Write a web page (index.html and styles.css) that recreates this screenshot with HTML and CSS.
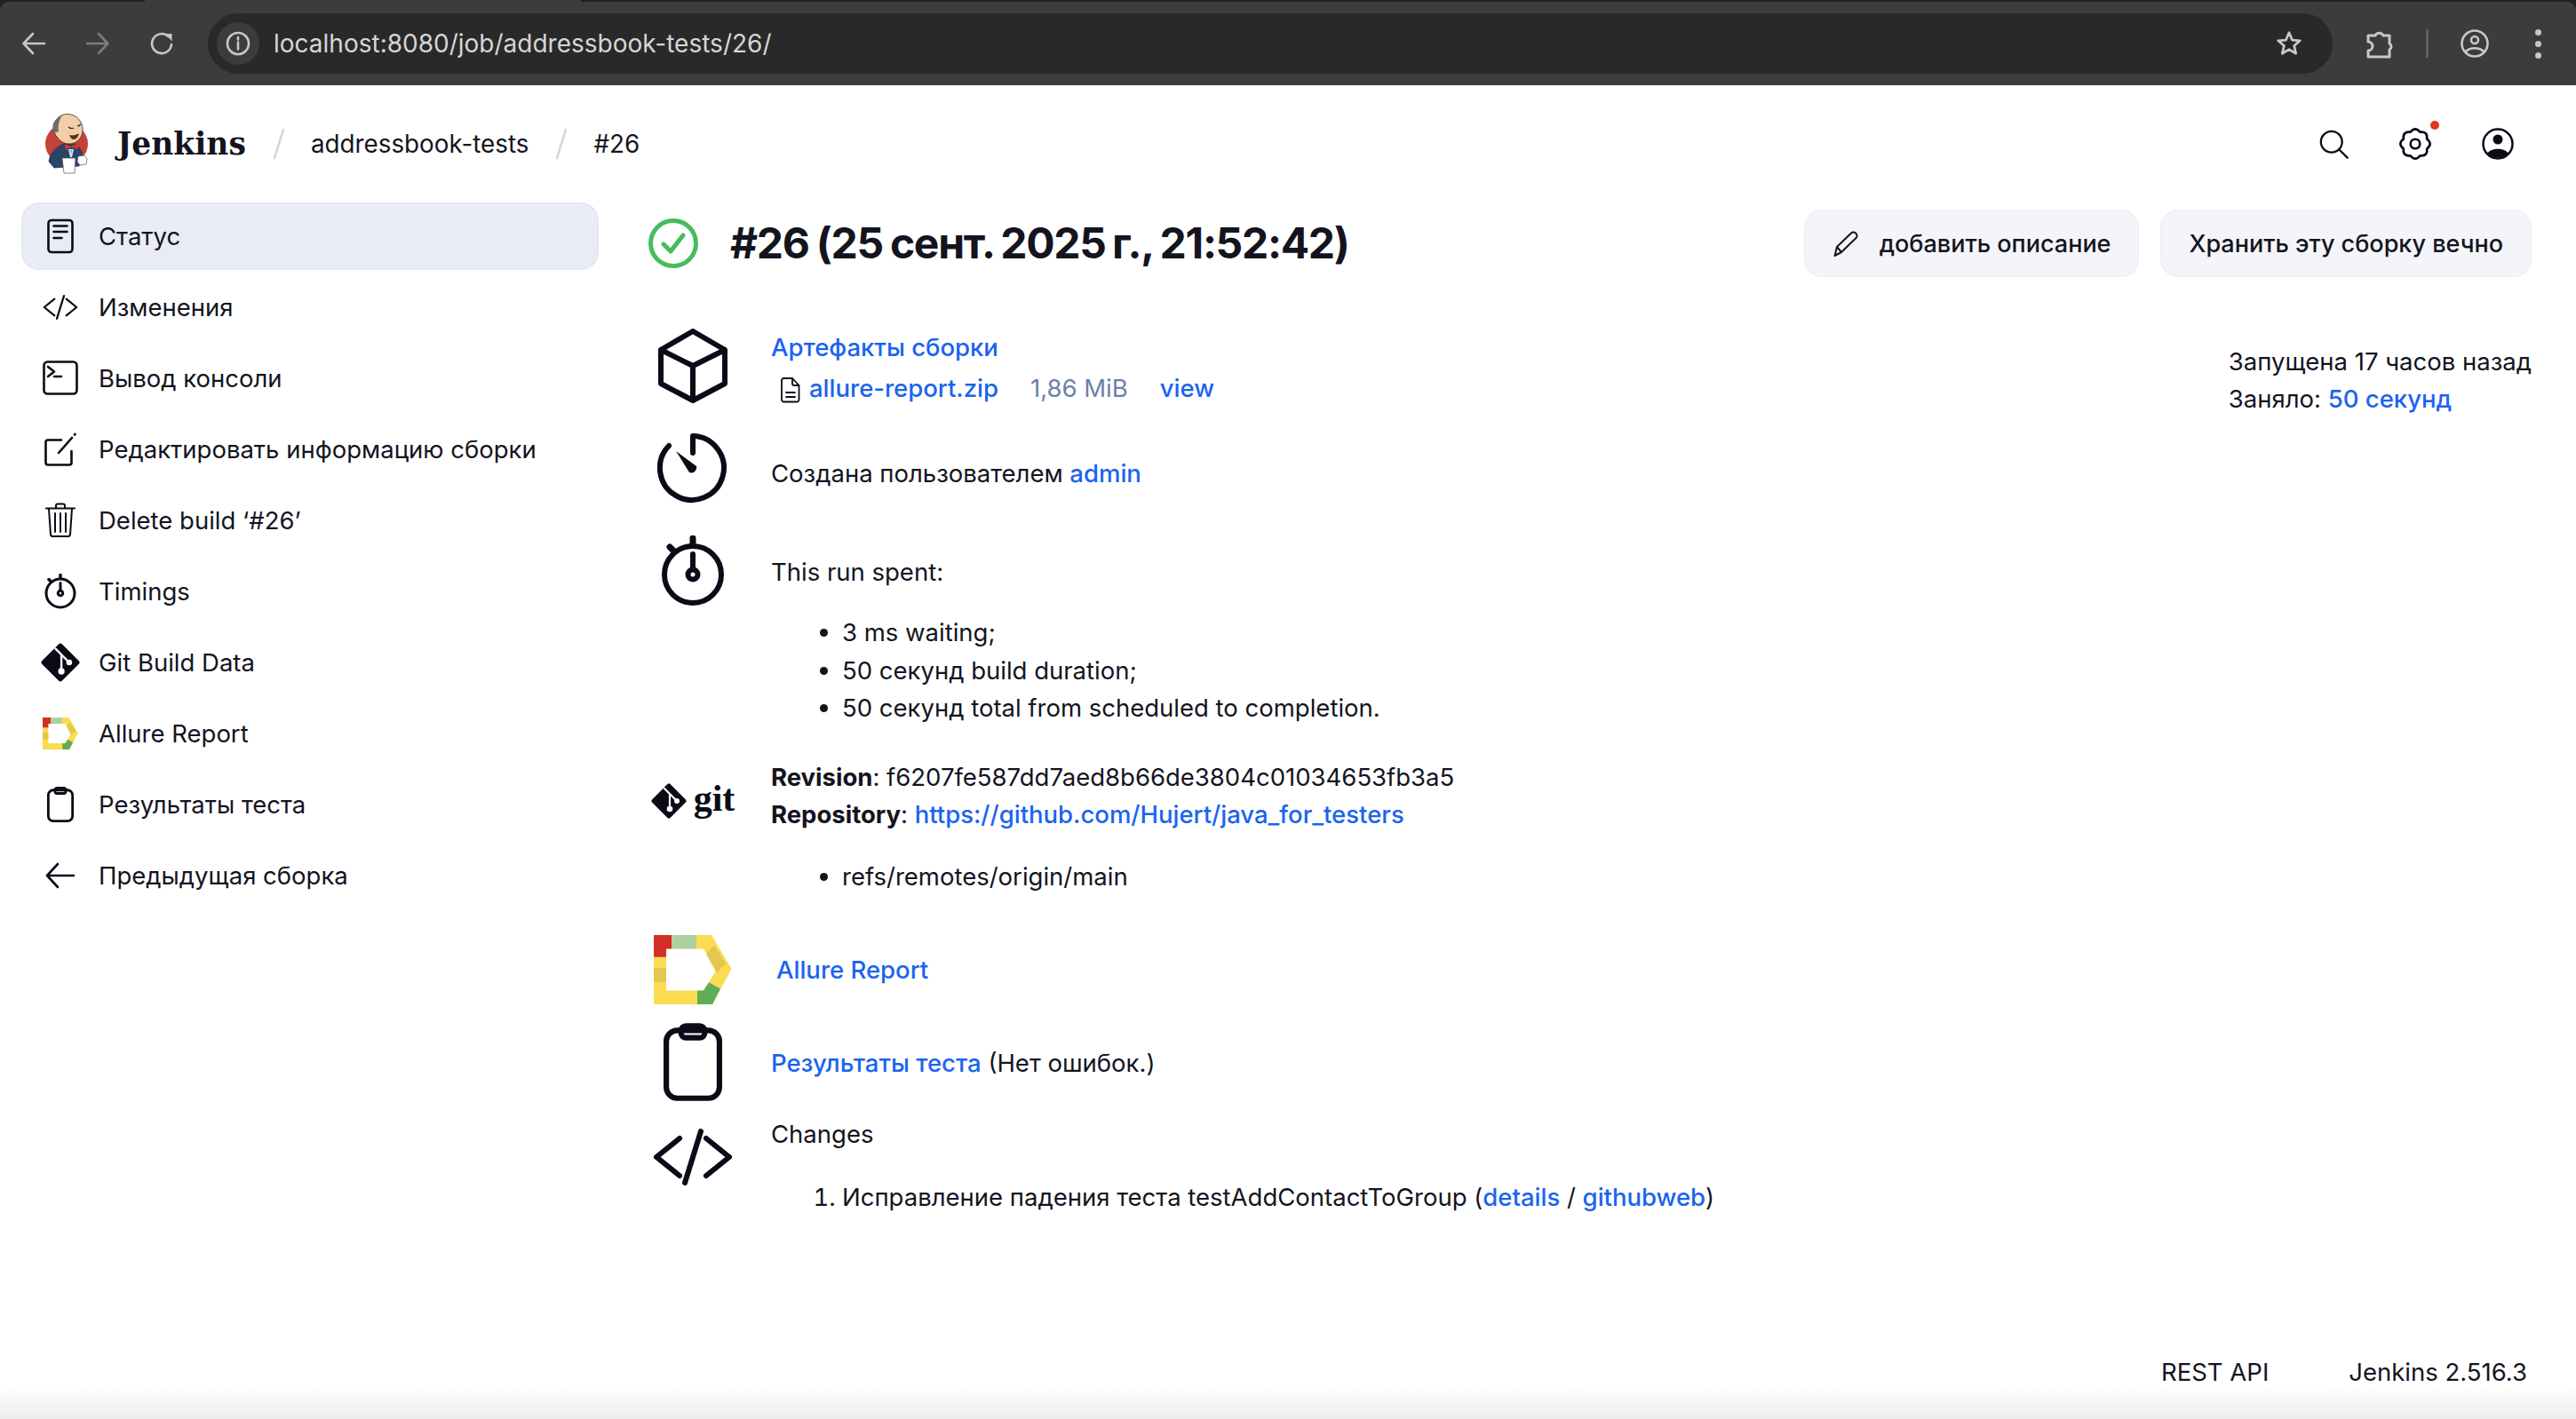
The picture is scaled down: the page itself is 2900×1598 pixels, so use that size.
FILE: index.html
```html
<!DOCTYPE html>
<html lang="ru">
<head>
    <meta charset="UTF-8">
    <meta name="viewport" content="width=device-width, initial-scale=1.0">
    <title>addressbook-tests #26 [Jenkins]</title>
    <link rel="stylesheet" href="styles.css">
</head>
<body>
    <svg class="sprite" width="0" height="0">
        <symbol id="i-code" viewBox="0 0 90 64">
            <path class="line code-line" d="M30 11 4 32l26 21M60 11l26 21-26 21M54 3 36 61"/>
        </symbol>
        <symbol id="i-stopwatch" viewBox="0 0 80 80">
            <circle class="line" cx="40" cy="44" r="32" stroke-width="6"/>
            <path class="line" d="M40 3v6M14 13l4 4" stroke-width="7"/>
            <path class="line" d="M40 21v16" stroke-width="6"/>
            <circle class="line" cx="40" cy="44" r="5.5" stroke-width="6"/>
        </symbol>
        <symbol id="i-clipboard" viewBox="0 0 64 85">
            <rect class="line" x="3" y="8" width="58" height="74" rx="12" stroke-width="6"/>
            <rect class="line" x="19" y="3" width="26" height="13" rx="5.5" stroke-width="6" fill="#fff"/>
        </symbol>
        <symbol id="i-git" viewBox="0 0 40 40">
            <path fill="#0b0b18" stroke="none" d="M38.700 18.200 21.800 1.300a2.500 2.500 0 0 0-3.600 0L1.300 18.200a2.500 2.500 0 0 0 0 3.600l16.900 16.900a2.500 2.500 0 0 0 3.600 0l16.900-16.900a2.500 2.500 0 0 0 0-3.600Z"/>
            <path fill="none" stroke="#fff" stroke-width="2.200" d="M15 6 29 20M21 12v18"/>
            <circle cx="29" cy="20" r="3" fill="#fff" stroke="none"/>
            <circle cx="21" cy="29" r="3.300" fill="#fff" stroke="none"/>
        </symbol>
        <symbol id="i-allure" viewBox="0 0 88 76" preserveAspectRatio="none">
            <path fill="#fbdc50" stroke="none" fill-rule="evenodd" d="M0 0h65l22.500 37L66 76H0ZM14 15v46h42l15-23-15-23Z"/>
            <path fill="#d32f26" stroke="none" d="M0 0h20v15h-6v9H0Z"/>
            <path fill="#aed0a3" stroke="none" d="M20 0h28v15H20Z"/>
            <path fill="#e2c84f" stroke="none" d="M0 36h14v16H0ZM68 11l13 20-10 11-12-21Z"/>
            <path fill="#5fae57" stroke="none" d="M62 52l13 7-9 17H49V61h7Z"/>
        </symbol>
    </svg>

    <div class="chrome">
        <div class="tabstrip"><div class="tab"></div></div>
        <div class="toolbar">
            <svg class="tb-icon back" viewBox="0 0 28 28"><path d="M26 14H3M13 3 2.500 14 13 25"/></svg>
            <svg class="tb-icon fwd" viewBox="0 0 28 28"><path d="M2 14h23M15 3l10.500 11L15 25"/></svg>
            <svg class="tb-icon reload" viewBox="0 0 28 28"><path d="M25 15a11 11 0 1 1-3.500-9"/><path class="solid" d="M18 3h7.500v8.500Z" /></svg>
            <div class="omnibox">
                <span class="site-info">
                    <svg class="tb-icon" viewBox="0 0 28 28"><circle cx="14" cy="14" r="12"/><path d="M14 12.500v8M14 7v2.500"/></svg>
                </span>
                <span class="url">localhost:8080/job/addressbook-tests/26/</span>
                <svg class="tb-icon star" viewBox="0 0 28 28"><path d="m14 2.500 3.300 7.800 8.200.7-6.200 5.400 1.900 8.100-7.200-4.300-7.200 4.300 1.900-8.100L2.500 11l8.200-.7Z"/></svg>
            </div>
            <svg class="tb-icon puzzle" viewBox="0 0 32 34"><path d="M3 8h8a5 5 0 0 1 9 0h7v9a4 4 0 0 1 0 7v8H3v-7a5 5 0 0 0 0-10Z"/></svg>
            <span class="tb-sep"></span>
            <svg class="tb-icon profile" viewBox="0 0 32 36"><circle cx="16" cy="18" r="14.500"/><circle cx="16" cy="14" r="4"/><path d="M6 27c5-5 15-5 20 0"/></svg>
            <span class="dots"><i></i><i></i><i></i></span>
        </div>
    </div>

    <header class="page-header">
        <a class="logo" href="#">
            <svg class="butler" viewBox="0 0 50 68">
                <ellipse cx="25" cy="34" rx="24" ry="23" fill="#c4423a"/>
                <path fill="#2b4568" stroke="#1f2c3d" stroke-width=".7" d="M5 54c1-10 9-17 17-20l12 0c6 3 9 9 9 15l-4 10-28 2Z"/>
                <path fill="#f0cfa6" stroke="#3b3028" stroke-width=".8" d="M11 18C10 7 17 .5 26 .5 36 .5 44 9 43 20 42 28 36 34 28 34 21 34 17 30 14 26 12 24 11 21 11 18Z"/>
                <path fill="#6d6b6d" d="M11 21C7 14 10 6 20 2.500c-4 5-5 12-4 18Z"/>
                <path fill="none" stroke="#2b2320" stroke-width="1.200" d="M27 15c2 2 4 2 6 1M37 14c2 0 3-1 4-2"/>
                <path fill="#5b2b1f" d="M28 24c4 1 8 0 11-2-1 4-3 7-6 7-2 0-4-2-5-5Z"/>
                <path fill="#d8332b" d="M23 34l7 3 8-4v7l-8-2-6 3Z"/>
                <path fill="#dbe8ee" d="M27 40h6l-2 9h-2Z"/>
                <path fill="#6aa7c4" d="M29 41h2l-1 5Z"/>
                <path fill="#fff" stroke="#555" stroke-width=".7" d="M20 50h15l-1 17H22Z"/>
                <path fill="#fff" stroke="#555" stroke-width=".7" d="M38 48l7-1 3 4-1 6-7 1-3-4Z"/>
            </svg>
            <span class="logo-text">Jenkins</span>
        </a>
        <svg class="crumb-sep" viewBox="0 0 14 36"><path d="M12 2 2 34"/></svg>
        <a class="crumb" href="#">addressbook-tests</a>
        <svg class="crumb-sep" viewBox="0 0 14 36"><path d="M12 2 2 34"/></svg>
        <a class="crumb" href="#">#26</a>
        <div class="header-actions">
            <svg class="hd-icon search" viewBox="0 0 36 36"><circle cx="15" cy="15" r="13"/><path d="m24.500 24.500 10 10"/></svg>
            <span class="gear">
                <svg class="hd-icon" viewBox="1 1 34 34"><path d="M23.170 5.530Q18-1 12.830 5.530 4.600 4.600 5.530 12.830-1 18 5.530 23.170 4.600 31.400 12.830 30.470 18 37 23.170 30.470 31.400 31.400 30.470 23.170 37 18 30.470 12.830 31.400 4.600 23.170 5.530Z"/><circle cx="18" cy="18" r="5"/></svg>
                <i class="badge"></i>
            </span>
            <svg class="hd-icon" viewBox="0 0 36 36"><circle cx="18" cy="18" r="16.500"/><circle class="solid" cx="18" cy="13" r="5.500"/><path class="solid" d="M6 29c4-7 20-7 24 0-6 6-18 6-24 0Z"/></svg>
        </div>
    </header>

    <div class="layout">
        <nav class="sidebar">
            <a class="nav-item active" href="#">
                <svg class="nav-icon" viewBox="0 0 40 40"><rect x="6.500" y="2" width="27" height="36" rx="3.500"/><path d="M12.500 8.500h15M12.500 15h15M12.500 22h9"/></svg>
                Статус
            </a>
            <a class="nav-item" href="#"><svg class="nav-icon"><use href="#i-code"/></svg>Изменения</a>
            <a class="nav-item" href="#">
                <svg class="nav-icon" viewBox="0 0 40 40"><rect x="1.500" y="1.500" width="37" height="36" rx="4"/><path d="m6 7 7 5.500L6 18M13 18h8"/></svg>
                Вывод консоли
            </a>
            <a class="nav-item" href="#">
                <svg class="nav-icon" viewBox="0 0 40 40"><path d="M21 9.500H6a2.500 2.500 0 0 0-2.500 2.500v23a2.500 2.500 0 0 0 2.500 2.500h24a2.500 2.500 0 0 0 2.500-2.500V22M18 24 33 7M36 3.500l.5-.5"/></svg>
                Редактировать информацию сборки
            </a>
            <a class="nav-item" href="#">
                <svg class="nav-icon thin" viewBox="0 0 40 40"><path d="M4 6.500h32M15 6V3.500a2 2 0 0 1 2-2h6a2 2 0 0 1 2 2V6M7 7l2 29a2.500 2.500 0 0 0 2.500 2h17a2.500 2.500 0 0 0 2.500-2l2-29M14 12v21M20 12v21M26 12v21"/></svg>
                Delete build ‘#26’
            </a>
            <a class="nav-item" href="#"><svg class="nav-icon"><use href="#i-stopwatch"/></svg>Timings</a>
            <a class="nav-item" href="#"><svg class="nav-icon big"><use href="#i-git"/></svg>Git Build Data</a>
            <a class="nav-item" href="#"><svg class="nav-icon allure"><use href="#i-allure"/></svg>Allure Report</a>
            <a class="nav-item" href="#"><svg class="nav-icon"><use href="#i-clipboard"/></svg>Результаты теста</a>
            <a class="nav-item" href="#">
                <svg class="nav-icon" viewBox="0 0 40 40"><path d="M35 20H6M17 7 5 20l12 13"/></svg>
                Предыдущая сборка
            </a>
        </nav>

        <main class="content">
            <div class="title-row">
                <svg class="status-icon" viewBox="0 0 56 56"><circle cx="28" cy="28" r="25.500"/><path d="m17 29 8 8 14-18"/></svg>
                <h1>#26 (25 сент. 2025&#8239;г., 21:52:42)</h1>
                <div class="title-actions">
                    <a class="btn" href="#">
                        <svg class="pencil" viewBox="0 0 32 30"><path d="M2.500 28 5 18 21 2.500a3.500 3.500 0 0 1 5 0l.5.5a3.500 3.500 0 0 1 0 5L10 24ZM5 18l5 6"/></svg>
                        добавить описание
                    </a>
                    <a class="btn" href="#">Хранить эту сборку вечно</a>
                </div>
            </div>

            <div class="build">
                <div class="build-details">
                    <section class="build-row">
                        <div class="row-icon">
                            <svg class="ic-cube" viewBox="0 0 80 84"><path d="M40 3 76 24v38L40 81 4 62V24ZM4 24l36 18 36-18M40 42v39"/></svg>
                        </div>
                        <div class="row-text">
                            <p><a href="#">Артефакты сборки</a></p>
                            <p class="artifact">
                                <svg class="file-icon" viewBox="0 0 22 30"><path d="M3.500 2H13l7.500 8v16a2.500 2.500 0 0 1-2.500 2.500H3.500A2.500 2.500 0 0 1 1 26V4.500A2.500 2.500 0 0 1 3.500 2ZM13 2v6a2 2 0 0 0 2 2h5.500M6 18h10M6 23h10"/></svg>
                                <a class="artifact-name" href="#">allure-report.zip</a>
                                <span class="size">1,86 MiB</span>
                                <a href="#">view</a>
                            </p>
                        </div>
                    </section>

                    <section class="build-row r-user">
                        <div class="row-icon">
                            <svg class="ic-80" viewBox="0 0 80 80"><path d="M40 23V4a36 36 0 1 1-27 11"/><path class="solid" d="M21 21 44 38a6 6 0 0 1-8 7Z"/></svg>
                        </div>
                        <div class="row-text"><p>Создана пользователем <a href="#">admin</a></p></div>
                    </section>

                    <section class="build-row r-time">
                        <div class="row-icon"><svg class="ic-80"><use href="#i-stopwatch"/></svg></div>
                        <div class="row-text">
                            <p>This run spent:</p>
                            <ul class="time-list">
                                <li>3 ms waiting;</li>
                                <li>50 секунд build duration;</li>
                                <li>50 секунд total from scheduled to completion.</li>
                            </ul>
                        </div>
                    </section>

                    <section class="build-row r-git">
                        <div class="row-icon">
                            <div class="git-logo"><svg class="ic-git"><use href="#i-git"/></svg><span>git</span></div>
                        </div>
                        <div class="row-text">
                            <p><b>Revision</b>: f6207fe587dd7aed8b66de3804c01034653fb3a5</p>
                            <p><b>Repository</b>: <a href="#">https://github.com/Hujert/java_for_testers</a></p>
                            <ul class="refs">
                                <li>refs/remotes/origin/main</li>
                            </ul>
                        </div>
                    </section>

                    <section class="build-row r-allure">
                        <div class="row-icon"><svg class="ic-allure"><use href="#i-allure"/></svg></div>
                        <div class="row-text"><p><a href="#">Allure Report</a></p></div>
                    </section>

                    <section class="build-row r-tests">
                        <div class="row-icon"><svg class="ic-clip"><use href="#i-clipboard"/></svg></div>
                        <div class="row-text"><p><a href="#">Результаты теста</a> (Нет ошибок.)</p></div>
                    </section>

                    <section class="build-row r-changes">
                        <div class="row-icon"><svg class="ic-code"><use href="#i-code"/></svg></div>
                        <div class="row-text">
                            <p>Changes</p>
                            <ol class="changes">
                                <li>Исправление падения теста testAddContactToGroup (<a href="#">details</a> / <a href="#">githubweb</a>)</li>
                            </ol>
                        </div>
                    </section>
                </div>

                <aside class="build-aside">
                    <p>Запущена 17 часов назад</p>
                    <p>Заняло: <a href="#">50 секунд</a></p>
                </aside>
            </div>
        </main>
    </div>

    <footer class="page-footer">
        <a href="#">REST API</a>
        <a href="#">Jenkins 2.516.3</a>
    </footer>
</body>
</html>
```

FILE: styles.css
```css
* {
    box-sizing: border-box;
}

body {
    margin: 0;
    height: 100vh;
    display: flex;
    flex-direction: column;
    overflow: hidden;
    background-color: #fff;
    color: #14141f;
    font-family: 'Inter', 'Liberation Sans', sans-serif;
    font-size: 27.500px;
    line-height: 42px;
}

p {
    margin: 0;
}

a {
    color: #1a64ef;
    font-weight: 500;
    text-decoration: none;
}

.sprite {
    position: absolute;
}

.line {
    fill: none;
    stroke: #0b0b18;
    stroke-linecap: round;
    stroke-linejoin: round;
}

.code-line {
    stroke-width: var(--code-sw, 6);
}

/* browser chrome */
.chrome {
    background-color: #222;
    flex-shrink: 0;
}

.tabstrip {
    height: 2px;
}

.tab {
    width: 491px;
    height: 2px;
    margin-left: 163px;
    background-color: #3c3c3c;
}

.toolbar {
    height: 94px;
    display: flex;
    align-items: center;
    background-color: #3c3c3c;
    border-radius: 10px 10px 0 0;
}

.tb-icon {
    width: 28px;
    height: 28px;
    fill: none;
    stroke: #c7c7c7;
    stroke-width: 2.600;
    stroke-linecap: round;
    stroke-linejoin: round;
    flex-shrink: 0;
}

.tb-icon .solid {
    fill: #c7c7c7;
    stroke: none;
}

.tb-icon.back {
    margin-left: 24px;
}

.tb-icon.fwd {
    margin-left: 44px;
    stroke: #7c7c7c;
}

.tb-icon.reload {
    margin-left: 44px;
}

.omnibox {
    width: 2392px;
    height: 68px;
    margin-left: 38px;
    padding: 0 34px 0 10px;
    display: flex;
    align-items: center;
    background-color: #292929;
    border-radius: 34px;
}

.site-info {
    width: 48px;
    height: 48px;
    display: flex;
    align-items: center;
    justify-content: center;
    background-color: #3c3c3c;
    border-radius: 50%;
}

.url {
    margin-left: 16px;
    color: #d6d6d6;
    font-size: 28px;
    flex: 1;
}

.tb-icon.star {
    width: 30px;
    height: 30px;
}

.tb-icon.puzzle {
    width: 32px;
    height: 34px;
    margin-left: 37px;
    stroke-width: 3;
}

.tb-sep {
    width: 3px;
    height: 32px;
    margin-left: 36px;
    background-color: #5f5f5f;
}

.tb-icon.profile {
    width: 32px;
    height: 36px;
    margin-left: 36px;
}

.dots {
    display: flex;
    flex-direction: column;
    gap: 6px;
    margin-left: 52px;
}

.dots i {
    width: 7px;
    height: 7px;
    background-color: #c7c7c7;
    border-radius: 50%;
}

/* jenkins header */
.page-header {
    height: 132px;
    flex-shrink: 0;
    display: flex;
    align-items: center;
    padding: 0 70px 0 50px;
}

.logo {
    display: flex;
    align-items: center;
    gap: 32px;
    color: #14141f;
}

.butler {
    width: 50px;
    height: 68px;
}

.logo-text {
    font-family: 'DejaVu Serif', 'Liberation Serif', serif;
    font-size: 34.500px;
    font-weight: 700;
}

.crumb-sep {
    width: 14px;
    height: 36px;
    margin: 0 29px 0 30px;
    fill: none;
    stroke: #cdd3e3;
    stroke-width: 2.500;
    stroke-linecap: round;
}

.crumb {
    color: #14141f;
    font-size: 27.800px;
    font-weight: 400;
}

.header-actions {
    margin-left: auto;
    display: flex;
    align-items: center;
    gap: 57px;
}

.hd-icon {
    width: 36px;
    height: 36px;
    display: block;
    fill: none;
    stroke: #0b0b18;
    stroke-width: 2.500;
    stroke-linecap: round;
    stroke-linejoin: round;
}

.hd-icon.search {
    width: 33px;
    height: 33px;
}

.hd-icon .solid {
    fill: #0b0b18;
    stroke: none;
}

.gear {
    position: relative;
}

.badge {
    position: absolute;
    top: -8px;
    right: -9px;
    width: 10px;
    height: 10px;
    background-color: #e8301c;
    border-radius: 50%;
}

/* sidebar + main */
.layout {
    flex: 1;
    display: flex;
    gap: 56px;
    padding: 0 50px 0 24px;
    min-height: 0;
}

.sidebar {
    width: 650px;
    flex-shrink: 0;
    display: flex;
    flex-direction: column;
    gap: 4px;
}

.nav-item {
    height: 76px;
    display: flex;
    align-items: center;
    gap: 23px;
    padding-left: 24px;
    color: #14141f;
    font-weight: 400;
    border-radius: 20px;
    border: 2px solid transparent;
}

.nav-item.active {
    background-color: #e9ecf4;
    border-color: #e5e8f1;
}

.nav-icon {
    --code-sw: 5;
    width: 40px;
    height: 40px;
    flex-shrink: 0;
    margin-left: -2px;
    overflow: visible;
    fill: none;
    stroke: #0b0b18;
    stroke-width: 2.600;
    stroke-linecap: round;
    stroke-linejoin: round;
}

.nav-icon.thin {
    stroke-width: 2;
}

.nav-icon.big {
    width: 44px;
    height: 44px;
    margin-left: -4px;
    margin-right: -2px;
}

.nav-icon.allure {
    height: 36px;
}

.content {
    flex: 1;
    min-width: 0;
    padding-top: 8px;
}

.title-row {
    height: 76px;
    display: flex;
    align-items: center;
    gap: 36px;
}

.status-icon {
    width: 56px;
    height: 56px;
    flex-shrink: 0;
    fill: none;
    stroke: #46bd5a;
    stroke-width: 5;
    stroke-linecap: round;
    stroke-linejoin: round;
}

h1 {
    margin: 0;
    font-size: 48px;
    line-height: 76px;
    font-weight: 700;
    letter-spacing: -1.300px;
    word-spacing: -2px;
}

.title-actions {
    margin-left: auto;
    display: flex;
    gap: 24px;
}

.btn {
    height: 76px;
    display: flex;
    align-items: center;
    gap: 21px;
    padding: 2px 30px 0;
    color: #14141f;
    font-size: 27px;
    font-weight: 500;
    background-color: #f4f5f9;
    border: 2px solid #eef0f5;
    border-radius: 20px;
}

.pencil {
    width: 32px;
    height: 30px;
    fill: none;
    stroke: #14141f;
    stroke-width: 2;
    stroke-linejoin: round;
}

.build {
    display: flex;
    margin-top: 58px;
}

.build-aside {
    margin-left: auto;
    margin-top: 16px;
    white-space: nowrap;
}

.build-row {
    display: flex;
    gap: 38px;
    align-items: flex-start;
}

.row-icon {
    width: 100px;
    flex-shrink: 0;
    display: flex;
    justify-content: center;
}

.row-icon svg {
    fill: none;
    stroke: #0b0b18;
    stroke-width: 6;
    stroke-linecap: round;
    stroke-linejoin: round;
}

.row-icon svg .solid {
    fill: #0b0b18;
    stroke: none;
}

.ic-cube {
    width: 80px;
    height: 84px;
}

.ic-80 {
    width: 80px;
    height: 80px;
}

.artifact {
    margin-top: 4px;
    display: flex;
    align-items: center;
    padding-left: 11px;
}

.file-icon {
    width: 22px;
    height: 30px;
    margin-top: 4px;
    fill: none;
    stroke: #0b0b18;
    stroke-width: 1.800;
    stroke-linejoin: round;
    stroke-linecap: round;
}

.artifact-name {
    margin-left: 10px;
}

.size {
    margin: 0 36px;
    color: #6d80a8;
}

.r-user {
    margin-top: 29px;
}

.r-user .row-text {
    padding-top: 25px;
}

.r-time {
    margin-top: 36px;
}

.r-time .row-text {
    padding-top: 20px;
}

ul,
ol {
    margin: 0;
    padding-left: 80px;
}

.time-list {
    margin-top: 26px;
}

.time-list li {
    line-height: 42.500px;
}

.r-git {
    margin-top: 35px;
}

.git-logo {
    display: flex;
    align-items: center;
    gap: 8px;
    margin-top: 26px;
    height: 44px;
}

.ic-git {
    width: 40px;
    height: 40px;
}

.git-logo span {
    margin-top: -5px;
    font-family: 'Liberation Serif', serif;
    font-size: 42px;
    font-weight: 700;
    line-height: 44px;
    color: #0b0b18;
}

.refs {
    margin-top: 28px;
}

b {
    font-weight: 700;
}

.r-allure {
    margin-top: 45px;
}

.ic-allure {
    width: 88px;
    height: 78px;
}

.r-allure .row-text {
    padding-top: 18px;
    margin-left: 6px;
}

.r-tests {
    margin-top: 21px;
}

.ic-clip {
    width: 66px;
    height: 88px;
}

.r-tests .row-text {
    padding-top: 24px;
}

.r-changes {
    margin-top: 16px;
}

.ic-code {
    width: 90px;
    height: 64px;
    margin-top: 15px;
}

.changes {
    margin-top: 29px;
}

/* footer */
.page-footer {
    height: 100px;
    flex-shrink: 0;
    display: flex;
    justify-content: flex-end;
    gap: 90px;
    padding: 26px 55px 0 0;
    background: linear-gradient(to bottom, #fff 60%, #eeeeee 100%);
}

.page-footer a {
    color: #14141f;
    font-weight: 400;
}
```
